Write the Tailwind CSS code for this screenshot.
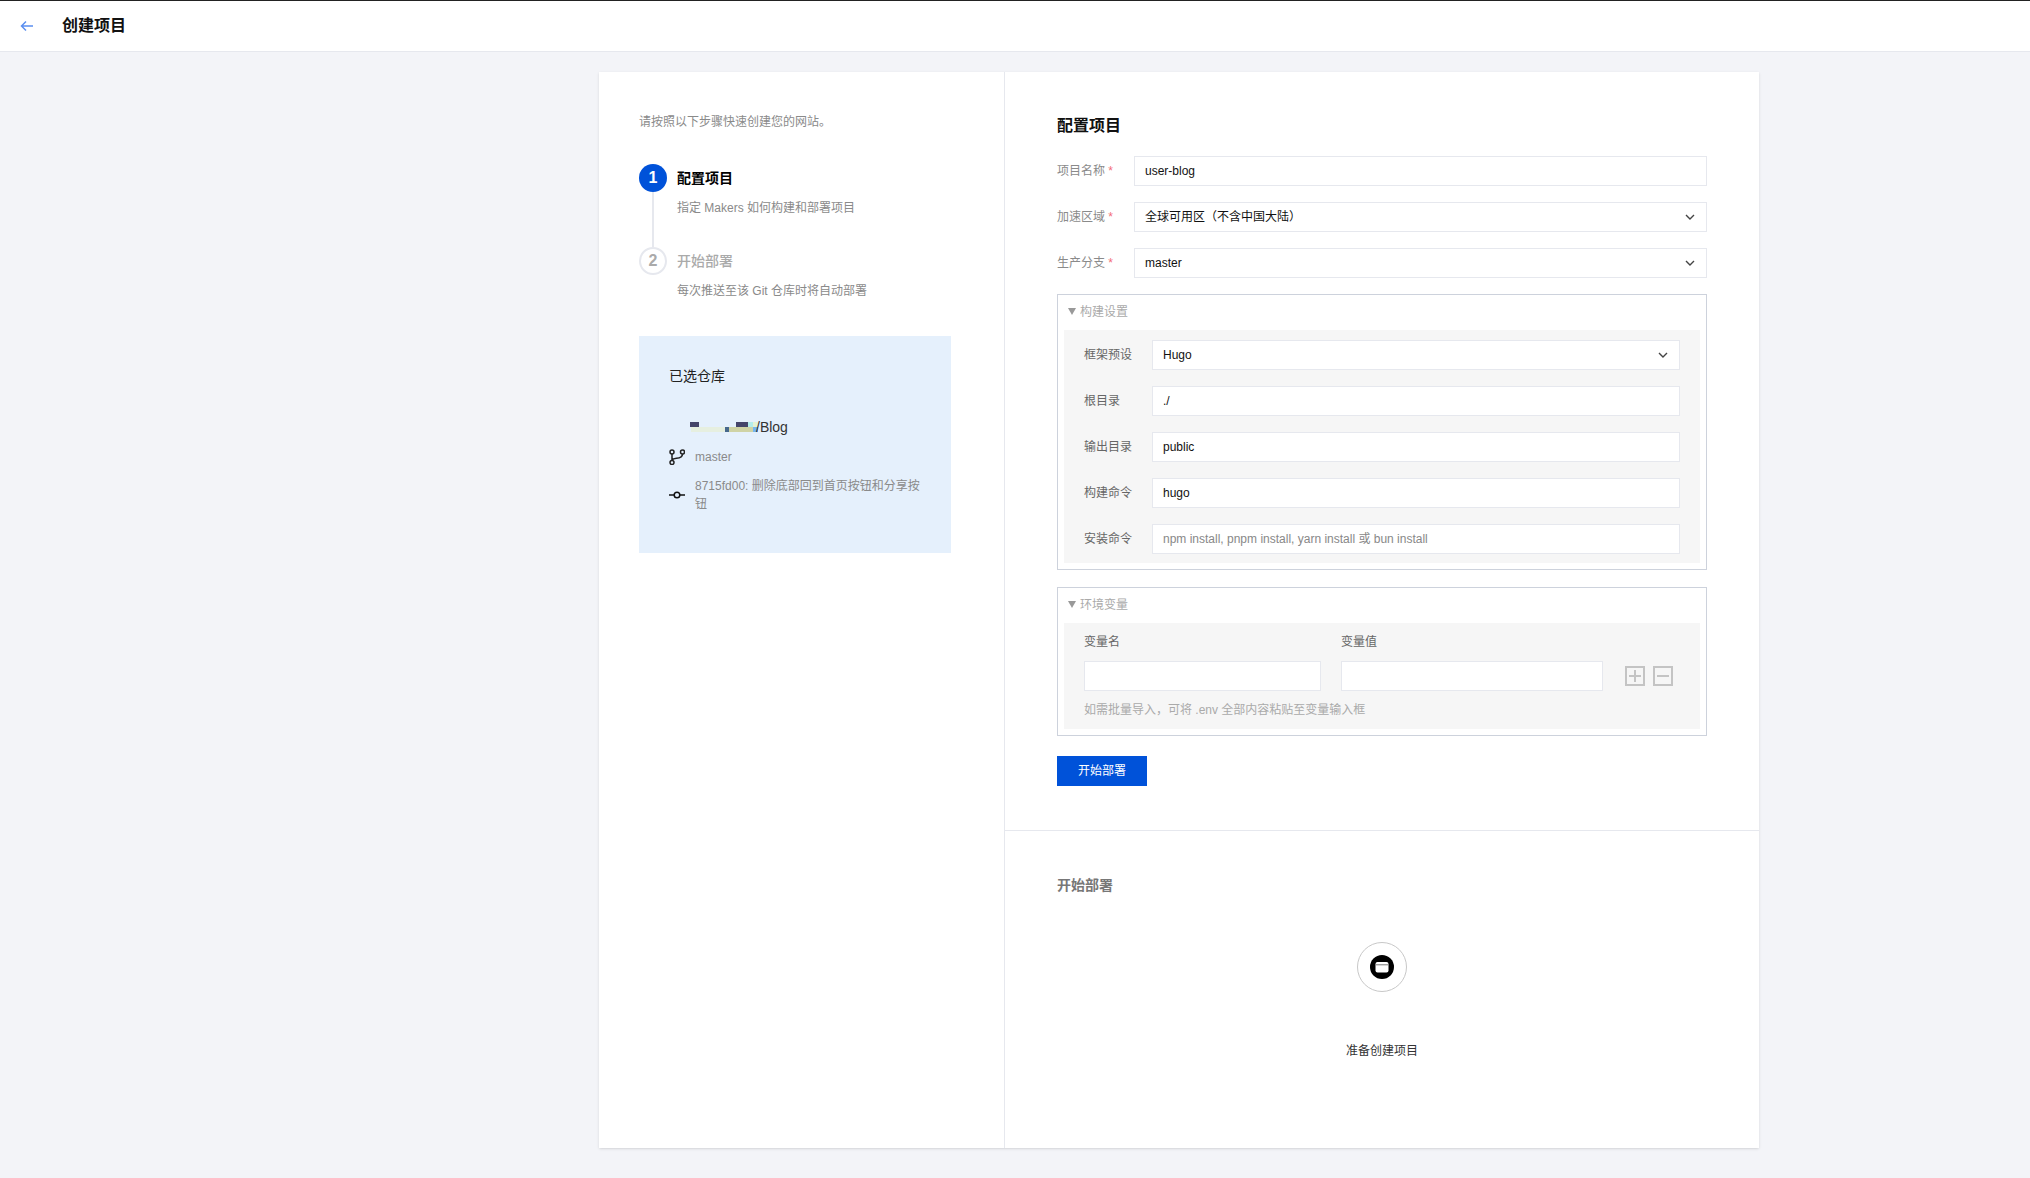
<!DOCTYPE html>
<html lang="zh-CN">
<head>
  <meta charset="UTF-8" />
  <title>创建项目</title>
  <script src="https://cdn.jsdelivr.net/npm/@tailwindcss/browser@4"></script>
</head>
<body class="bg-[#f3f4f8] min-h-screen text-xs text-[#1a1a1a] font-['Liberation_Sans','Noto_Sans_CJK_SC',sans-serif]">
  <!-- top bar -->
  <header class="h-[52px] bg-white border-t border-t-[#222] border-b border-b-[#e6e8ee] flex items-center pl-[20px]">
    <svg class="w-[14px] h-[12px] text-[#5b8ff0]" viewBox="0 0 14 12" fill="none" stroke="currentColor" stroke-width="1.5"><path d="M13 6H1.5M6 1.5L1.5 6L6 10.5" /></svg>
    <h1 class="ml-[28px] text-base font-semibold text-[#111]">创建项目</h1>
  </header>

  <main class="ml-[599px] mt-[20px] w-[1160px] h-[1076px] bg-white flex shadow-sm">
    <!-- left column -->
    <aside class="w-[406px] border-r border-[#e6e8ee] pl-[40px] pt-[40px]">
      <p class="leading-5 text-[#8a8a8a]">请按照以下步骤快速创建您的网站。</p>

      <div class="mt-[32px] flex gap-[10px] h-[83px]">
        <div class="flex flex-col items-center">
          <div class="w-[28px] h-[28px] shrink-0 rounded-full bg-[#0052d9] text-white flex items-center justify-center text-base font-bold">1</div>
          <div class="w-[2px] flex-1 bg-[#e6e8ee]"></div>
        </div>
        <div>
          <div class="h-[28px] flex items-center text-sm font-semibold text-black">配置项目</div>
          <div class="mt-[6px] leading-5 text-[#8a8a8a]">指定 Makers 如何构建和部署项目</div>
        </div>
      </div>
      <div class="flex gap-[10px]">
        <div class="w-[28px] h-[28px] rounded-full border-2 border-[#e6e8ee] text-[#aaa] flex items-center justify-center text-base font-bold">2</div>
        <div>
          <div class="h-[28px] flex items-center text-sm font-medium text-[#aaa]">开始部署</div>
          <div class="mt-[6px] leading-5 text-[#8a8a8a]">每次推送至该 Git 仓库时将自动部署</div>
        </div>
      </div>

      <!-- selected repo -->
      <section class="mt-[35px] w-[312px] h-[217px] bg-[#e5f0fc] pl-[30px] pr-[30px] pt-[30px]">
        <h2 class="h-5 leading-5 text-sm text-[#222]">已选仓库</h2>
        <div class="mt-[31px] ml-[21px] h-5 flex items-center text-sm text-[#333]">
          <svg class="w-[68px] h-[10px] shrink-0" viewBox="0 0 68 10" shape-rendering="crispEdges">
            <rect x="0" y="0" width="9" height="5" fill="#45456a" />
            <rect x="46" y="0" width="12" height="5" fill="#45456a" />
            <rect x="58" y="0" width="5" height="5" fill="#b4ecec" />
            <rect x="63" y="0" width="5" height="5" fill="#e4f2d4" />
            <rect x="1" y="5" width="34" height="5" fill="#e6efe0" />
            <rect x="35" y="5" width="4" height="5" fill="#46688c" />
            <rect x="39" y="5" width="24" height="5" fill="#cfd3a5" />
            <rect x="63" y="5" width="5" height="5" fill="#75b5f0" />
          </svg>
          <span class="-ml-[2px]">/Blog</span>
        </div>
        <div class="mt-[10px] h-5 flex items-center gap-[10px] text-[#8a8a8a]">
          <svg class="w-4 h-4 shrink-0 text-[#222]" viewBox="0 0 16 16" fill="none" stroke="currentColor" stroke-width="1.5"><circle cx="3" cy="3" r="2" /><circle cx="3" cy="13.5" r="2" /><circle cx="13.5" cy="3" r="2" /><path d="M3 5v6.5M13.5 5c0 3-3 4-6 4.3C5 9.5 3.6 10 3 11" /></svg>
          <span>master</span>
        </div>
        <div class="mt-[10px] flex items-center gap-[10px] text-[#8a8a8a]">
          <svg class="w-4 h-4 shrink-0 text-[#111]" viewBox="0 0 16 16" fill="none" stroke="currentColor" stroke-width="1.5"><circle cx="8" cy="8" r="2.8" /><path d="M0 8h5M11 8h5" /></svg>
          <span class="leading-[18px]">8715fd00: 删除底部回到首页按钮和分享按钮</span>
        </div>
      </section>
    </aside>

    <!-- right column -->
    <div class="flex-1">
      <section class="px-[52px] pt-[42px] pb-[44px] border-b border-[#e6e8ee]">
        <h2 class="h-6 leading-6 text-base font-semibold text-[#111]">配置项目</h2>

        <div class="mt-[18px] flex flex-col gap-4">
          <div class="flex items-center">
            <label class="w-[77px] text-[#8a8a8a]">项目名称 <span class="text-[#f36d78]">*</span></label>
            <input value="user-blog" class="flex-1 h-[30px] border border-[#e6e8ee] bg-white px-[10px] text-xs text-[#111] outline-none" />
          </div>
          <div class="flex items-center">
            <label class="w-[77px] text-[#8a8a8a]">加速区域 <span class="text-[#f36d78]">*</span></label>
            <div class="flex-1 h-[30px] border border-[#e6e8ee] bg-white pl-[10px] pr-[11px] flex items-center justify-between text-[#111]">
              <span>全球可用区（不含中国大陆）</span>
              <svg class="w-[10px] h-[6px] text-[#444]" viewBox="0 0 10 6" fill="none" stroke="currentColor" stroke-width="1.4"><path d="M1 1l4 4 4-4" /></svg>
            </div>
          </div>
          <div class="flex items-center">
            <label class="w-[77px] text-[#8a8a8a]">生产分支 <span class="text-[#f36d78]">*</span></label>
            <div class="flex-1 h-[30px] border border-[#e6e8ee] bg-white pl-[10px] pr-[11px] flex items-center justify-between text-[#111]">
              <span>master</span>
              <svg class="w-[10px] h-[6px] text-[#444]" viewBox="0 0 10 6" fill="none" stroke="currentColor" stroke-width="1.4"><path d="M1 1l4 4 4-4" /></svg>
            </div>
          </div>
        </div>

        <!-- build settings -->
        <div class="mt-4 h-[276px] border border-[#cdd2dc] px-[6px]">
          <div class="h-[35px] pb-[2px] flex items-center gap-[4px] pl-[4px] text-[#aaa]">
            <span class="w-0 h-0 border-x-[4px] border-x-transparent border-t-[7px] border-t-[#999]"></span>
            <span>构建设置</span>
          </div>
          <div class="h-[233px] bg-[#f6f6f6] pl-[20px] pr-[20px] pt-[10px] flex flex-col gap-4">
            <div class="flex items-center">
              <label class="w-[68px] text-[#666]">框架预设</label>
              <div class="flex-1 h-[30px] border border-[#e6e8ee] bg-white pl-[10px] pr-[11px] flex items-center justify-between text-[#111]">
                <span>Hugo</span>
                <svg class="w-[10px] h-[6px] text-[#444]" viewBox="0 0 10 6" fill="none" stroke="currentColor" stroke-width="1.4"><path d="M1 1l4 4 4-4" /></svg>
              </div>
            </div>
            <div class="flex items-center">
              <label class="w-[68px] text-[#666]">根目录</label>
              <input value="./" class="flex-1 h-[30px] border border-[#e6e8ee] bg-white px-[10px] text-xs text-[#111] outline-none" />
            </div>
            <div class="flex items-center">
              <label class="w-[68px] text-[#666]">输出目录</label>
              <input value="public" class="flex-1 h-[30px] border border-[#e6e8ee] bg-white px-[10px] text-xs text-[#111] outline-none" />
            </div>
            <div class="flex items-center">
              <label class="w-[68px] text-[#666]">构建命令</label>
              <input value="hugo" class="flex-1 h-[30px] border border-[#e6e8ee] bg-white px-[10px] text-xs text-[#111] outline-none" />
            </div>
            <div class="flex items-center">
              <label class="w-[68px] text-[#666]">安装命令</label>
              <input placeholder="npm install, pnpm install, yarn install 或 bun install" class="flex-1 h-[30px] border border-[#e6e8ee] bg-white px-[10px] text-xs text-[#111] outline-none placeholder:text-[#888]" />
            </div>
          </div>
        </div>

        <!-- env vars -->
        <div class="mt-[17px] h-[149px] border border-[#cdd2dc] px-[6px]">
          <div class="h-[35px] pb-[2px] flex items-center gap-[4px] pl-[4px] text-[#aaa]">
            <span class="w-0 h-0 border-x-[4px] border-x-transparent border-t-[7px] border-t-[#999]"></span>
            <span>环境变量</span>
          </div>
          <div class="h-[106px] bg-[#f6f6f6] pl-[20px] pt-[9px]">
            <div class="flex gap-[20px] h-[20px] leading-5 text-[#666]">
              <span class="w-[237px]">变量名</span>
              <span>变量值</span>
            </div>
            <div class="mt-[9px] flex items-center">
              <input class="w-[237px] h-[30px] border border-[#e6e8ee] bg-white outline-none" />
              <input class="ml-[20px] w-[262px] h-[30px] border border-[#e6e8ee] bg-white outline-none" />
              <button class="ml-[22px] w-5 h-5 border-2 border-[#c4c4c4] flex items-center justify-center">
                <svg class="w-[12px] h-[12px] text-[#c4c4c4]" viewBox="0 0 12 12" fill="none" stroke="currentColor" stroke-width="2"><path d="M0 6h12M6 0v12" /></svg>
              </button>
              <button class="ml-[8px] w-5 h-5 border-2 border-[#c4c4c4] flex items-center justify-center">
                <svg class="w-[12px] h-[12px] text-[#c4c4c4]" viewBox="0 0 12 12" fill="none" stroke="currentColor" stroke-width="2"><path d="M0 6h12" /></svg>
              </button>
            </div>
            <p class="mt-[9px] leading-5 text-[#aaa]">如需批量导入，可将 .env 全部内容粘贴至变量输入框</p>
          </div>
        </div>

        <button class="mt-[20px] block w-[90px] h-[30px] bg-[#0052d9] text-white text-xs">开始部署</button>
      </section>

      <!-- deploy -->
      <section class="px-[52px] pt-[44px]">
        <h2 class="h-5 leading-5 text-sm font-semibold text-[#777]">开始部署</h2>
        <div class="mt-[47px] flex flex-col items-center">
          <div class="w-[50px] h-[50px] rounded-full border border-[#c8c8c8] flex items-center justify-center">
            <svg class="w-6 h-6" viewBox="0 0 24 24"><circle cx="12" cy="12" r="12" fill="#000" /><rect x="5.5" y="7" width="13" height="10.5" rx="2" fill="#fff" /><path d="M6 9.8h12" stroke="#777" stroke-width="1" /></svg>
          </div>
          <p class="mt-[49px] leading-5 text-[#333]">准备创建项目</p>
        </div>
      </section>
    </div>
  </main>
</body>
</html>
